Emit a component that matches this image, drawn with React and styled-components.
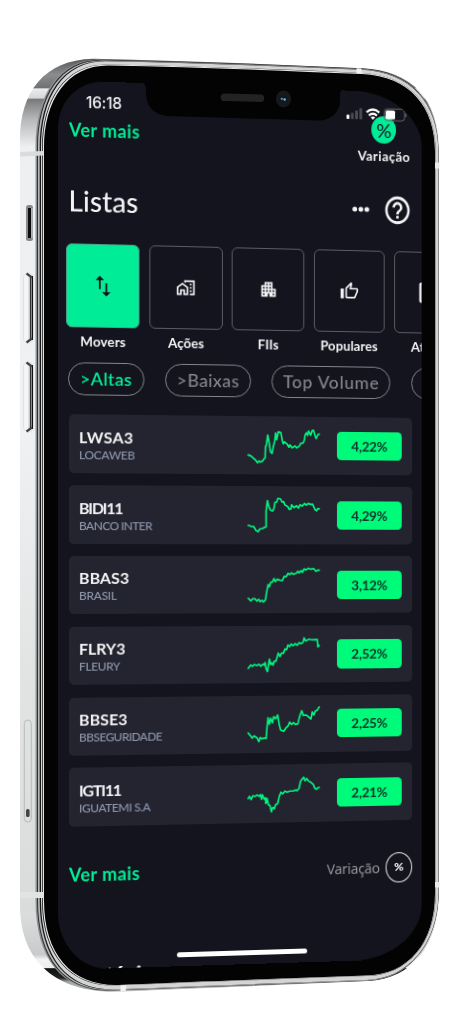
import React from "react";
import styled, { createGlobalStyle } from "styled-components";
import {
  MdOutlineHomeWork,
  MdApartment,
  MdOutlineThumbUp,
  MdHelpOutline,
  MdOutlineArticle,
} from "react-icons/md";

const GlobalStyle = createGlobalStyle`
  * { box-sizing: border-box; }
  html, body { margin: 0; background: #fff; overflow: hidden; }
`;

const green = "#00ec96";

const Stage = styled.main`
  position: relative;
  width: 462px;
  height: 1024px;
  padding: 80px 0 0 58px;
  overflow: hidden;
  background: #fff;
  font-family: Lato, "Open Sans", sans-serif;
  color: #f4f4f6;
`;

const Drawing = styled.svg`
  position: absolute;
  inset: 0;
  width: 462px;
  height: 1024px;
  pointer-events: none;
`;

/* The display is seen slightly from the left; the far edge shrinks. */
const Screen = styled.section`
  position: relative;
  width: 374.4px;
  height: 890px;
  padding-top: 25px;
  overflow: hidden;
  background: #13141d;
  border-radius: 46px 72px 72px 50px / 48px 56px 56px 58px;
  transform-origin: 0 480px;
  transform: matrix3d(1, 0, 0, 0.0000763, 0, 1, 0, 0, 0, 0, 1, 0, 0, 0, 0, 1);
`;

const StatusBar = styled.div`
  position: absolute;
  z-index: 2;
  top: 12px;
  left: 28px;
  right: 15px;
  height: 20px;
  display: flex;
  align-items: center;
  justify-content: space-between;
`;

const Clock = styled.span`
  font: 500 15.5px/20px Inter, sans-serif;
  letter-spacing: -0.2px;
`;

const StatusIcons = styled.svg`
  width: 64px;
  height: 14px;
  margin-top: 1px;
`;

const TopRow = styled.div`
  height: 66px;
  padding: 0 12px 0 11px;
  display: flex;
  justify-content: space-between;
`;

const MoreLink = styled.a`
  font-size: 18px;
  line-height: 24px;
  font-weight: 700;
  letter-spacing: 0.45px;
  color: ${green};
  margin-top: ${(p) => p.$top || "0"};
`;

const Metric = styled.div`
  width: 56px;
  display: flex;
  flex-direction: column;
  align-items: center;
  font-size: 13.5px;
  line-height: 18px;
  font-weight: 700;
  letter-spacing: 0.45px;
  gap: 4px;
`;

const MetricDot = styled.span`
  width: 26px;
  height: 28px;
  border-radius: 50%;
  background: ${green};
  color: #13141d;
  font: 400 20px/28px Lato, sans-serif;
  text-align: center;
`;

const SectionHeader = styled.header`
  height: 58px;
  padding: 0 10px 0 10.5px;
  display: flex;
  align-items: center;
  justify-content: space-between;
`;

const Title = styled.h2`
  margin: 0;
  font-size: 28px;
  line-height: 36px;
  font-weight: 500;
  letter-spacing: 0.1px;
`;

const Actions = styled.div`
  display: flex;
  align-items: center;
  gap: 14px;
  padding-top: 2px;
`;

const Dots = styled.svg`
  width: 18px;
  height: 6px;
`;

const HelpIcon = styled(MdHelpOutline)`
  width: 31px;
  height: 34px;
`;

const Categories = styled.div`
  display: flex;
  gap: 9.8px;
  width: 430px;
  margin-top: 14px;
  padding-left: 8px;
`;

const Category = styled.div`
  flex: 0 0 74.4px;
  display: flex;
  flex-direction: column;
  align-items: center;
  gap: 5px;
  font-size: 13.5px;
  line-height: 18px;
  font-weight: 700;
  letter-spacing: 0.1px;
`;

const Tile = styled.div`
  width: 100%;
  height: 83.5px;
  display: flex;
  align-items: center;
  justify-content: center;
  border: 1px solid ${(p) => (p.$active ? "#4c9f86" : "#5c5d64")};
  border-radius: 6px;
  background: ${(p) => (p.$active ? green : "transparent")};
  color: ${(p) => (p.$active ? "#13141d" : "#f4f4f6")};
  svg {
    width: ${(p) => p.$iconWidth || 20}px;
    height: ${(p) => (p.$iconWidth || 20) + 2}px;
  }
`;

const Filters = styled.div`
  display: flex;
  gap: 21.4px;
  width: 480px;
  margin-top: 12px;
  padding-left: 10px;
`;

const Pill = styled.div`
  flex: 0 0 ${(p) => p.$width};
  height: 33.5px;
  display: flex;
  align-items: center;
  justify-content: center;
  border: 1.2px solid #85868b;
  border-radius: 17px;
  font-size: 18px;
  letter-spacing: ${(p) => p.$spacing};
  font-weight: ${(p) => (p.$active ? 600 : 500)};
  color: ${(p) => (p.$active ? green : "#85868b")};
`;

const StockList = styled.div`
  display: flex;
  flex-direction: column;
  gap: 12.3px;
  margin: 19.4px 10.8px 0 10.5px;
`;

const StockRow = styled.article`
  height: 58.5px;
  padding: 0 10.8px 0 10.5px;
  display: flex;
  align-items: center;
  border-radius: 5px;
  background: #242430;
`;

const Names = styled.div`
  flex: 1;
  padding-top: 2.4px;
`;

const Ticker = styled.div`
  font-size: 16px;
  line-height: 19px;
  font-weight: 700;
  letter-spacing: ${(p) => p.$spacing};
`;

const Company = styled.div`
  font-size: 12px;
  line-height: 17px;
  font-weight: 500;
  color: #8d97ac;
  letter-spacing: ${(p) => p.$spacing || "-0.55px"};
`;

const Spark = styled.svg`
  width: 73.5px;
  height: 44.1px;
  margin-right: 18.3px;
`;

const Badge = styled.div`
  width: 67.8px;
  height: 29.3px;
  border-radius: 4.5px;
  background: #00fa7a;
  color: #10342b;
  font-size: 14px;
  line-height: 30px;
  font-weight: 700;
  text-align: center;
  letter-spacing: -0.3px;
`;

const Footer = styled.div`
  height: 32px;
  margin-top: 32.6px;
  padding: 0 10.5px 0 11px;
  display: flex;
  align-items: center;
  justify-content: space-between;
`;

const FooterMetric = styled.div`
  display: flex;
  align-items: center;
  gap: 6px;
  font-size: 14.2px;
  font-weight: 400;
  font-family: "Noto Sans", sans-serif;
  letter-spacing: -0.2px;
  color: #93949a;
`;

const RingPercent = styled.span`
  width: 28px;
  height: 31px;
  border: 1.5px solid #e8e8ea;
  border-radius: 50%;
  color: #f4f4f6;
  font: 900 12px/28px Lato, sans-serif;
  text-align: center;
`;

const NextSection = styled.div`
  margin-top: 58px;
`;

const HomeIndicator = styled.div`
  position: absolute;
  left: 120px;
  top: 876px;
  width: 134px;
  height: 5.2px;
  border-radius: 3px;
  background: #fff;
`;

const stocks = [
  { ticker: "LWSA3", spacing: "0.4px", name: "LOCAWEB", nameSpacing: "-0.3px", value: "4,22%", mid: 120.6, line: "38,148 46,151 54,158 60,163 66,171 71,166 75,169 81,166 85,160 89,157 90,124 93,117 97,88 101,110 105,138 110,143 114,122 118,107 121,82 124,102 129,78 137,81 141,104 144,114 147,108 155,114 161,124 164,117 171,126 179,120 185,126 193,120 197,112 204,111 208,102 210,88 214,80 218,88 221,75 227,87 232,73 236,73 240,88 244,97 249,85 253,84" },
  { ticker: "BIDI11", spacing: "-1.2px", name: "BANCO INTER", value: "4,29%", mid: 329.4, line: "38,361 46,364 55,365 61,376 68,380 73,372 81,371 87,367 92,366 92,318 96,287 100,304 105,315 112,318 116,310 119,292 124,291 128,280 136,282 140,291 145,290 149,300 157,304 162,313 167,312 169,299 176,308 184,302 190,309 195,299 201,303 209,295 214,300 220,295 227,298 233,297 240,313 245,317 249,310 253,311" },
  { ticker: "BBAS3", spacing: "0.1px", name: "BRASIL", nameSpacing: "-0.3px", value: "3,12%", mid: 538, line: "38,579 46,586 52,580 58,580 64,587 70,582 74,589 80,585 84,590 90,584 93,564 98,538 102,544 106,531 111,530 116,520 120,529 126,522 134,525 141,526 147,513 153,514 158,504 163,508 169,503 175,507 183,504 188,498 192,503 198,496 202,501 207,491 213,494 220,489 228,492 236,490 243,498 248,495 253,495" },
  { ticker: "FLRY3", spacing: "0", name: "FLEURY", nameSpacing: "-0.4px", value: "2,52%", mid: 102, line: "38,143 46,133 51,137 57,132 64,135 70,131 76,137 82,131 86,134 89,126 92,144 96,153 102,116 106,132 110,127 113,134 117,122 122,122 129,98 134,108 139,98 144,99 149,86 154,88 158,74 163,79 168,71 174,76 180,70 186,75 192,67 198,70 204,66 207,53 212,62 222,57 232,59 247,58 249,80 253,76" },
  { ticker: "BBSE3", spacing: "0.1px", name: "BBSEGURIDADE", value: "2,25%", mid: 310.6, line: "38,336 46,345 50,351 56,345 65,351 70,362 74,350 80,354 86,351 92,353 95,318 98,291 102,310 106,292 111,306 115,288 121,294 127,283 132,313 136,328 145,332 152,322 159,315 163,305 169,312 175,306 180,312 188,310 194,287 200,271 205,285 214,284 223,292 228,296 232,275 237,284 241,272 247,270 253,260" },
  { ticker: "IGTI11", spacing: "-1.2px", name: "IGUATEMI S.A", nameSpacing: "-0.45px", value: "2,21%", mid: 519.3, line: "38,531 42,525 47,534 52,523 59,525 65,521 71,525 75,520 78,534 81,521 86,534 90,530 91,547 95,532 99,551 104,554 108,572 112,559 117,563 121,551 127,548 132,526 137,514 142,519 149,511 156,514 164,511 174,511 181,508 186,510 192,503 196,483 200,477 206,470 210,481 215,474 221,482 229,487 235,492 239,503 244,507 249,503 253,502" },
];

const ArrowsIcon = () => (
  <svg viewBox="0 0 20 22" fill="currentColor">
    <path d="M6 14.200V5.200H2.600L6.900.8l4.300 4.400H7.800v9zM12.600 8.200h1.800v9h3.400l-4.300 4.400-4.300-4.400h3.400z" />
  </svg>
);

/* Face outline with independent left, top, right and bottom edges. */
const face = (l, t, r, b) =>
  `M${l} 148C${l} ${t + 35} ${l + 23} ${t} ${l + 64} ${t}` +
  `C${l + 150} ${t + 1.5} 280 ${t + 5} 362 ${t + 8.5}C410 ${t + 11} ${r} ${t + 41} ${r} 152` +
  `V893C${r} 943 408 ${b - 10} 366 ${b - 9.5}C280 ${b - 6.5} 190 ${b - 3} ${l + 74} ${b}` +
  `C${l + 28} ${b + 1} ${l} ${b - 30} ${l} 900Z`;

const outer =
  "M20 140C20 92 44 60 93 58.7C180 60.5 270 64.3 362 68.3C412 70 439 100 439 150V893C439 945 412 979 368 981C280 985 190 989 112 991.8C60 991 20 965 20 905Z";

const Chassis = () => (
  <Drawing viewBox="0 0 462 1024">
    <defs>
      <clipPath id="body">
        <path d={outer} />
      </clipPath>
      <linearGradient id="side" gradientUnits="userSpaceOnUse" x1="20" y1="58" x2="20" y2="992">
        <stop offset="0" stopColor="#555659" />
        <stop offset="0.018" stopColor="#8b8c8e" />
        <stop offset="0.032" stopColor="#707174" />
        <stop offset="0.033" stopColor="#ececec" />
        <stop offset="0.043" stopColor="#d6d7d8" />
        <stop offset="0.044" stopColor="#77797b" />
        <stop offset="0.065" stopColor="#b4b6b8" />
        <stop offset="0.095" stopColor="#eeeff1" />
        <stop offset="0.4" stopColor="#f0f1f3" />
        <stop offset="0.65" stopColor="#e2e4e4" />
        <stop offset="0.92" stopColor="#dadcdc" />
        <stop offset="0.96" stopColor="#c9cacb" />
        <stop offset="0.965" stopColor="#f2f2f2" />
        <stop offset="0.974" stopColor="#eeeeee" />
        <stop offset="0.975" stopColor="#111" />
        <stop offset="0.985" stopColor="#222" />
        <stop offset="0.989" stopColor="#a5a5a7" />
        <stop offset="1" stopColor="#bbb" />
      </linearGradient>
      <linearGradient id="slot" x1="0" x2="1">
        <stop offset="0" stopColor="#f1f2f3" />
        <stop offset="0.3" stopColor="#c5c6c8" />
        <stop offset="0.5" stopColor="#333" />
        <stop offset="0.7" stopColor="#888" />
        <stop offset="0.9" stopColor="#111" />
        <stop offset="1" stopColor="#777" />
      </linearGradient>
    </defs>
    <path d={outer} fill="url(#side)" />
    <g clipPath="url(#body)">
      <path d={face(35.5, 59.4, 438.7, 990.8)} fill="#8d9092" />
      <path d={face(37, 59.7, 438.6, 990.6)} fill="#2f3132" />
      <path d={face(38, 60.5, 438.5, 990.2)} fill="#b4b6b7" />
      <path d={face(39.7, 61, 438.4, 989.6)} fill="#161616" />
      <path d={face(41, 61.2, 438.4, 989.4)} fill="#d3d4d5" />
      <path d={face(42, 64.4, 435.700, 985.6)} fill="#1b1b1b" />
      <path d={face(42.8, 64.6, 435.500, 985.5)} fill="#e4e4e4" />
      <path d={face(44, 65.5, 435, 985)} fill="#030304" />
    </g>
    <path d="M20 152l23-1v4.500l-23 1z" fill="#d9dcdb" />
    <path d="M20 892h23v6H20z" fill="#e2e4e4" />
    <path d="M435 162.500h4.500v6H435zM435 882h4.500v5.500H435z" fill="#ececec" />
    <path d="M356.500 68.300l5 .2v5l-5-.2zM120.500 985.500l6-.3-1 6-5 .2z" fill="#f2f2f2" />
    <g>
      <rect x="26" y="205" width="7" height="36" rx="2.500" fill="#88898b" />
      <rect x="28" y="208" width="3.200" height="30" fill="#0c0c0c" />
      <rect x="31.400" y="208" width="1" height="30" fill="#ddd" />
      {[272, 361].map((y) => (
        <g key={y}>
          <rect x="23.500" y={y + 1} width="10" height="70" rx="5" fill="#f4f5f6" stroke="#d4d5d6" strokeWidth=".6" />
          <rect x="28" y={y + 4} width="5" height="64" fill="url(#slot)" />
          <path d={`M26.500 ${y + 1.500}l5.500 4M26.500 ${y + 70.500}l5.500-4`} stroke="#444" strokeWidth="2.200" />
        </g>
      ))}
      <rect x="24.300" y="720" width="7" height="102" rx="3.500" fill="none" stroke="#b3b5b6" strokeWidth=".9" />
      <rect x="26" y="809" width="3.600" height="8" rx="1.600" fill="#444" />
    </g>
  </Drawing>
);

const Notch = () => (
  <Drawing viewBox="0 0 462 1024">
    <path
      d="M138 76V81.300Q145.500 82 145.800 88L146 95C147 108 156 115.500 168 116L318 120.500C330 120.500 339.500 113 340 101V94Q340.500 89 346 88.800L346 80Z"
      fill="#030304"
    />
    <path d="M224.500 97.300l36 .9" stroke="#232326" strokeWidth="7.500" strokeLinecap="round" />
    <ellipse cx="283.500" cy="99" rx="7.600" ry="8.400" fill="#17181b" />
    <circle cx="283.300" cy="99" r="3.600" fill="#0c1822" />
    <circle cx="281.800" cy="98.800" r="1.100" fill="#5f9cba" />
    <circle cx="284.600" cy="99.500" r="1.200" fill="#88b9d2" />
  </Drawing>
);

const Header = ({ title }) => (
  <SectionHeader>
    <Title>{title}</Title>
    <Actions>
      <Dots viewBox="0 0 18 6" fill="#f4f4f6">
        <circle cx="2.700" cy="3" r="2.500" />
        <circle cx="9" cy="3" r="2.500" />
        <circle cx="15.300" cy="3" r="2.500" />
      </Dots>
      <HelpIcon preserveAspectRatio="none" />
    </Actions>
  </SectionHeader>
);

const categories = [
  { label: "Movers", icon: <ArrowsIcon />, active: true },
  { label: "Ações", icon: <MdOutlineHomeWork /> },
  { label: "FIIs", icon: <MdApartment /> },
  { label: "Populares", icon: <MdOutlineThumbUp /> },
  { label: "Ativos", icon: <MdOutlineArticle />, iconWidth: 28 },
];

export default function App() {
  return (
    <>
      <GlobalStyle />
      <Stage>
        <Chassis />
        <Screen>
          <StatusBar>
            <Clock>16:18</Clock>
            <StatusIcons viewBox="0 0 64 14">
              <rect x="0" y="8.500" width="3" height="4.500" rx="1" fill="#fff" />
              <g fill="#4a4b52">
                <rect x="4.600" y="6.500" width="3" height="6.500" rx="1" />
                <rect x="9" y="4" width="3" height="9" rx="1" />
                <rect x="13.400" y="1.500" width="3" height="11.500" rx="1" />
              </g>
              <g fill="none" stroke="#fff" strokeWidth="2.300">
                <path d="M21 5.300q6.700-5.600 13.400 0M23.500 8.600q4.200-3.600 8.400 0" />
              </g>
              <path d="M27.700 13l-2.300-2.500q2.300-1.800 4.600 0z" fill="#fff" />
              <rect x="39.500" y="1.200" width="21.500" height="12" rx="3.500" fill="none" stroke="#65666c" />
              <path d="M62.300 5.500v3.600" stroke="#65666c" strokeWidth="1.300" />
              <rect x="41" y="2.700" width="10" height="9" rx="1.500" fill="#fff" />
            </StatusIcons>
          </StatusBar>
          <TopRow>
            <MoreLink $top="12px">Ver mais</MoreLink>
            <Metric>
              <MetricDot>%</MetricDot>
              Variação
            </Metric>
          </TopRow>
          <Header title="Listas" />
          <Categories>
            {categories.map((c) => (
              <Category key={c.label}>
                <Tile $active={c.active} $iconWidth={c.iconWidth}>{c.icon}</Tile>
                {c.label}
              </Category>
            ))}
          </Categories>
          <Filters>
            <Pill $active $width="76.5px" $spacing="0.3px">&gt;Altas</Pill>
            <Pill $width="88px" $spacing="0.4px">&gt;Baixas</Pill>
            <Pill $width="124px" $spacing="0.8px">Top Volume</Pill>
            <Pill $width="90px" $spacing="0.5px" />
          </Filters>
          <StockList>
            {stocks.map((s) => (
              <StockRow key={s.ticker}>
                <Names>
                  <Ticker $spacing={s.spacing}>{s.ticker}</Ticker>
                  <Company $spacing={s.nameSpacing}>{s.name}</Company>
                </Names>
                <Spark viewBox={`38 ${s.mid - 65} 215 130`} preserveAspectRatio="none" overflow="visible">
                  <polyline points={s.line} fill="none" stroke="#00f57e" strokeWidth="5" strokeLinejoin="round" strokeLinecap="round" />
                </Spark>
                <Badge>{s.value}</Badge>
              </StockRow>
            ))}
          </StockList>
          <Footer>
            <MoreLink>Ver mais</MoreLink>
            <FooterMetric>
              Variação
              <RingPercent>%</RingPercent>
            </FooterMetric>
          </Footer>
          <NextSection>
            <Header title="Notícias" />
          </NextSection>
          <HomeIndicator />
        </Screen>
        <Notch />
      </Stage>
    </>
  );
}
